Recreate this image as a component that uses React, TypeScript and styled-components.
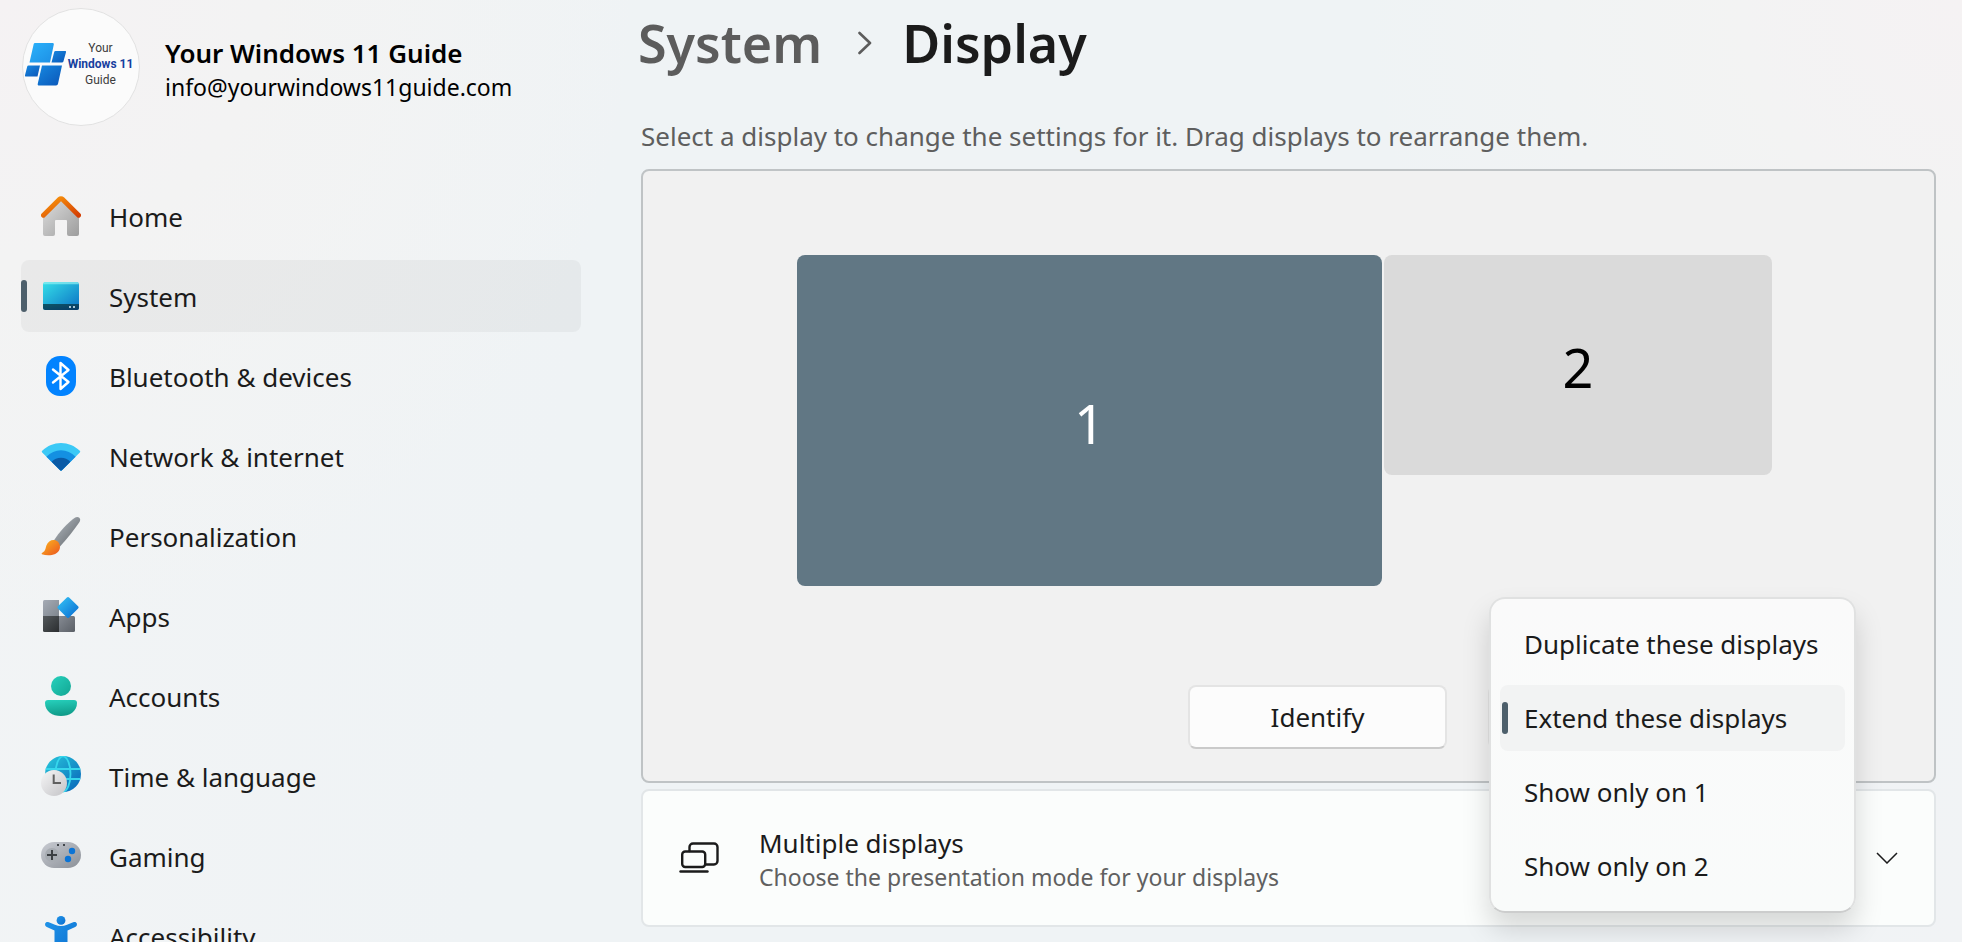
import React from "react";
import styled, { createGlobalStyle } from "styled-components";

const GlobalStyle = createGlobalStyle`
  *, *::before, *::after { box-sizing: border-box; }
  body {
    margin: 0;
    color: #1b1b1b;
    font-family: "Noto Sans", "Open Sans", sans-serif;
    font-size: 26px;
    line-height: 36px;
  }
  button { font: inherit; color: inherit; }
`;

const Page = styled.div`
  display: flex;
  gap: 60px;
  height: 100vh;
  padding: 0 26px 0 21px;
  overflow: hidden;
  background:
    radial-gradient(circle at 0 0, #f5f2f3 0, #f3f3f3 260px, rgba(243, 243, 243, 0) 640px),
    radial-gradient(circle at 100% 0, #f5f2f3 0, #f3f3f3 220px, rgba(243, 243, 243, 0) 600px),
    linear-gradient(100deg, #f2f4f5 0, #eff3f5 30%, #eff3f5 80%, #f1f3f5 100%);
`;

const Sidebar = styled.aside`
  flex: 0 0 560px;
  min-width: 0;
`;

const Profile = styled.div`
  display: flex;
  align-items: center;
  gap: 25px;
  padding-top: 8px;
  margin-bottom: 54px;
`;

const Avatar = styled.div`
  display: flex;
  align-items: center;
  flex: none;
  width: 118px;
  height: 118px;
  padding: 0 5px 6px 2px;
  margin-left: 1px;
  border: 1px solid #e2e2e2;
  border-radius: 50%;
  background: #fbfbfb;
`;

const AvatarText = styled.div`
  flex: 1;
  color: #3c3c3c;
  font: 12px/16px Roboto, sans-serif;
  text-align: center;
  white-space: nowrap;
`;

const AvatarStrong = styled.div`
  color: #173f9f;
  font-weight: 700;
`;

const ProfileText = styled.div`
  padding-top: 5px;
  color: #000;
  line-height: 34px;
`;

const ProfileName = styled.div`
  font-weight: 600;
`;

const ProfileMail = styled.div`
  font-size: 23px;
`;

const NavList = styled.ul`
  display: flex;
  flex-direction: column;
  gap: 8px;
  margin: 0;
  padding: 0;
  list-style: none;
`;

const NavLink = styled.a<{ $active?: boolean }>`
  position: relative;
  display: flex;
  align-items: center;
  gap: 28px;
  height: 72px;
  padding: 0 20px;
  border-radius: 8px;
  background: ${(p) => (p.$active ? "rgba(0, 0, 0, 0.04)" : "transparent")};
  color: inherit;
  text-decoration: none;
`;

const NavLabel = styled.span`
  padding-top: 2px;
`;

const Pill = styled.span`
  position: absolute;
  left: 0;
  top: 50%;
  width: 6px;
  height: 32px;
  margin-top: -16px;
  border-radius: 3px;
  background: #4d5f6b;
`;

const NavIcon = styled.svg`
  flex: none;
  width: 40px;
  height: 40px;
`;

const Main = styled.main`
  flex: 1;
  min-width: 0;
`;

const Breadcrumb = styled.h1`
  display: flex;
  align-items: center;
  gap: 30px;
  margin: 0;
  padding-top: 7px;
  font-size: 52px;
  font-weight: 600;
  line-height: 72px;
`;

const CrumbLink = styled.a`
  margin: 0 6px 0 -3px;
  color: #5c5c5c;
  text-decoration: none;
`;

const Hint = styled.p`
  margin: 39px 0 15px;
  color: #5e5e5e;
`;

const Panel = styled.section`
  display: flex;
  flex-direction: column;
  padding: 84px 78px 32px 80px;
  border: 2px solid #bfc3c5;
  border-radius: 8px;
  background: #f1f1f1;
`;

const Arrangement = styled.div`
  display: flex;
  align-items: flex-start;
  justify-content: center;
  gap: 2px;
  padding-right: 10px;
`;

const Monitor = styled.button<{ $selected?: boolean }>`
  width: ${(p) => (p.$selected ? "585px" : "388px")};
  height: ${(p) => (p.$selected ? "331px" : "220px")};
  padding: 4px 0 0;
  border: 0;
  border-radius: 8px;
  background: ${(p) => (p.$selected ? "#617784" : "#dadada")};
  color: ${(p) => (p.$selected ? "#fff" : "#000")};
  font-size: 54px;
  line-height: 72px;
`;

const Actions = styled.div`
  display: flex;
  justify-content: flex-end;
  gap: 41px;
  margin-top: 99px;
`;

const ActionButton = styled.button`
  width: 259px;
  height: 64px;
  padding: 0;
  border: 2px solid #e4e4e4;
  border-bottom-color: #cacaca;
  border-radius: 8px;
  background: #fcfcfc;
`;

const Dropdown = styled.div`
  position: relative;
  width: 368px;
  height: 64px;
`;

const DropdownTrigger = styled(ActionButton)`
  display: block;
  width: 100%;
`;

const Menu = styled.div`
  position: absolute;
  left: 1px;
  right: 0;
  top: -88px;
  z-index: 1;
  display: flex;
  flex-direction: column;
  gap: 8px;
  padding: 12px 9px;
  border: 2px solid #e0e1e1;
  border-bottom-color: #cccdcd;
  border-radius: 16px;
  background: linear-gradient(#fafafa, #f9fbfa);
  box-shadow: 0 16px 28px rgba(0, 0, 0, 0.15);
`;

const MenuItem = styled.button<{ $selected?: boolean }>`
  position: relative;
  height: 66px;
  padding: 0 0 0 24px;
  border: 0;
  border-radius: 8px;
  background: ${(p) => (p.$selected ? "#f2f3f3" : "transparent")};
  text-align: left;
  white-space: nowrap;
`;

const MenuPill = styled(Pill)`
  left: 2px;
`;

const Card = styled.button`
  display: flex;
  align-items: center;
  width: 100%;
  height: 138px;
  margin-top: 6px;
  padding: 0 36px;
  border: 2px solid #e2e6e8;
  border-radius: 8px;
  background: #fbfdfc;
  text-align: left;
`;

const CardText = styled.span`
  display: flex;
  flex: 1;
  flex-direction: column;
  margin-left: 40px;
  padding-top: 4px;
  line-height: 34px;
`;

const CardNote = styled.span`
  color: #606060;
  font-size: 23px;
`;

const Gradient = ({ id, from, to, vertical }: { id: string; from: string; to: string; vertical?: boolean }) => (
  <linearGradient id={id} x1="0" y1="0" x2={vertical ? "0.2" : "1"} y2="1">
    <stop offset="0" stopColor={from} />
    <stop offset="1" stopColor={to} />
  </linearGradient>
);

const HomeIcon = (
  <>
    <defs>
      <Gradient id="homeWall" from="#dedede" to="#9d9d9d" />
      <Gradient id="homeRoof" from="#fb9a0c" to="#d43f04" />
    </defs>
    <path d="M2 18 20 3l18 15v20a2 2 0 0 1-2 2h-8a2 2 0 0 1-2-2V25a1 1 0 0 0-1-1H15a1 1 0 0 0-1 1v13a2 2 0 0 1-2 2H4a2 2 0 0 1-2-2z" fill="url(#homeWall)" />
    <path d="M2.4 19.3 18.5 3.2a2.1 2.1 0 0 1 3 0l16.1 16.1" fill="none" stroke="url(#homeRoof)" strokeWidth="4.8" strokeLinecap="round" />
  </>
);

const SystemIcon = (
  <>
    <defs>
      <Gradient id="sysScreen" from="#35dfe8" to="#0b70c4" />
      <Gradient id="sysBar" from="#0e5566" to="#083a66" />
    </defs>
    <rect x="2" y="6" width="36" height="28" rx="2.5" fill="url(#sysScreen)" />
    <path d="M2 8.2A2.3 2.3 0 0 1 4.300 6h31.400A2.300 2.300 0 0 1 38 8.200z" fill="#8ff0f2" opacity=".7" />
    <path d="M2 28h36v3.500a2.500 2.500 0 0 1-2.500 2.500h-31A2.500 2.500 0 0 1 2 31.500z" fill="url(#sysBar)" />
    <path d="M28 30h2v2h-2zM32 30h2v2h-2z" fill="#a9c6d6" />
  </>
);

const BluetoothIcon = (
  <>
    <rect x="5" y="0" width="30" height="40" rx="14" fill="#0283ff" />
    <path d="m12 13.500 15.500 12.500L19.500 33V7l8 7L12 26.500" fill="none" stroke="#fff" strokeWidth="2.400" strokeLinecap="round" strokeLinejoin="round" />
  </>
);

const NetworkIcon = (
  <>
    <path d="M1.200 16.500a1.200 1.200 0 0 1 0-1.800C6.500 9.800 13 7 20 7s13.500 2.800 18.800 7.700a1.200 1.200 0 0 1 0 1.800L20.900 34.200a1.300 1.300 0 0 1-1.800 0z" fill="#3bc9f6" />
    <path d="M5.400 20.700C9.500 16.500 14.500 14.200 20 14.200s10.500 2.300 14.600 6.500L20.900 34.200a1.300 1.300 0 0 1-1.800 0z" fill="#1490e2" />
    <path d="M10.600 25.800c2.600-2.600 5.800-4 9.400-4s6.800 1.400 9.400 4l-8.500 8.400a1.300 1.300 0 0 1-1.800 0z" fill="#0a5aa6" />
  </>
);

const BrushIcon = (
  <>
    <defs>
      <Gradient id="brushHandle" from="#b6bdc4" to="#5f6468" />
      <Gradient id="brushPaint" from="#fdb81e" to="#ea5420" />
    </defs>
    <path d="M12.500 25C18 16.500 27 6.500 34.200 1.600c3-2 6.500 1 4.300 4.400C33.500 13.500 26.500 22.500 19 30.500z" fill="url(#brushHandle)" />
    <path d="M.9 38.300c-.6-.6-.2-1.300.8-1.800C4.500 35 4.500 32 5.400 29.500c1.500-4.300 5.500-6.300 9-5.200 3.800 1.300 5.400 5.300 4.200 8.900C16.500 39.500 7 40.300.9 38.300z" fill="url(#brushPaint)" />
  </>
);

const AppsIcon = (
  <>
    <defs>
      <Gradient id="appsA" from="#a5abb5" to="#80878f" />
      <Gradient id="appsB" from="#54595c" to="#2b2e30" />
      <Gradient id="appsC" from="#868b93" to="#5a5f66" />
      <Gradient id="appsD" from="#37c6f7" to="#0669d0" />
    </defs>
    <path d="M3.500 4H18v16H2V5.500A1.500 1.500 0 0 1 3.500 4z" fill="url(#appsA)" />
    <path d="M2 20h16v16H3.500A1.500 1.500 0 0 1 2 34.500z" fill="url(#appsB)" />
    <path d="M18 20h14.500a1.500 1.500 0 0 1 1.500 1.500v13a1.500 1.500 0 0 1-1.500 1.500H18z" fill="url(#appsC)" />
    <path d="M25.900 1.400a1.600 1.600 0 0 1 2.200 0l9 8.900a1.500 1.500 0 0 1 0 2.200l-9 8.900a1.600 1.600 0 0 1-2.200 0l-9-8.900a1.500 1.500 0 0 1 0-2.200z" fill="url(#appsD)" />
  </>
);

const AccountsIcon = (
  <>
    <defs>
      <Gradient id="accTop" from="#27d1bd" to="#12a693" />
      <Gradient id="accBody" from="#27d1bd" to="#109c8a" vertical />
    </defs>
    <circle cx="20" cy="10" r="10" fill="url(#accTop)" />
    <path d="M7 24h26a3 3 0 0 1 3 3c0 8.500-7.500 13-16 13S4 35.500 4 27a3 3 0 0 1 3-3z" fill="url(#accBody)" />
  </>
);

const TimeIcon = (
  <>
    <defs>
      <Gradient id="globe" from="#29c9dc" to="#0562b8" />
      <Gradient id="clock" from="#f6f6f7" to="#c3c3c6" />
    </defs>
    <circle cx="22" cy="18" r="18" fill="url(#globe)" />
    <g fill="none" stroke="#36d7ec" strokeWidth="1.800">
      <path d="M4.700 13h34.600M5 23h34.200" />
      <ellipse cx="22" cy="18" rx="7.500" ry="17.600" />
    </g>
    <circle cx="13" cy="27" r="13" fill="url(#clock)" />
    <path d="M12.700 18.500V27H20" fill="none" stroke="#606060" strokeWidth="2" />
  </>
);

const GamingIcon = (
  <>
    <defs>
      <Gradient id="pad" from="#c8cbd2" to="#8b9097" />
    </defs>
    <rect x="0" y="6" width="40" height="26" rx="13" fill="url(#pad)" />
    <circle cx="11" cy="19" r="7" fill="#a6abb1" />
    <path d="M11 14v10M6 19h10" stroke="#3b3f43" strokeWidth="2" />
    <circle cx="31" cy="15" r="3.200" fill="#0b74d6" />
    <circle cx="27" cy="23" r="3.200" fill="#0b74d6" />
    <path d="M16 8h2v2h-2zM22 8h2v2h-2z" fill="#43474b" />
  </>
);

const AccessibilityIcon = (
  <>
    <defs>
      <Gradient id="access" from="#2093e8" to="#0a6fd0" />
    </defs>
    <circle cx="20" cy="4.400" r="4.400" fill="url(#access)" />
    <path d="M4.300 7.300c.7-1.300 2-1.700 3.500-1.100C12 8 16 10 20 10s8-2 12.200-3.800c1.500-.6 2.800-.2 3.500 1.100.6 1.500 0 3-1.500 3.600L26.500 14.500V38a2.500 2.500 0 0 1-5 0V28h-3v10a2.500 2.500 0 0 1-5 0V14.500L5.800 10.900c-1.500-.6-2.100-2.100-1.500-3.600z" fill="url(#access)" />
  </>
);

const navItems = [
  { label: "Home", icon: HomeIcon },
  { label: "System", icon: SystemIcon, active: true },
  { label: "Bluetooth & devices", icon: BluetoothIcon },
  { label: "Network & internet", icon: NetworkIcon },
  { label: "Personalization", icon: BrushIcon },
  { label: "Apps", icon: AppsIcon },
  { label: "Accounts", icon: AccountsIcon },
  { label: "Time & language", icon: TimeIcon },
  { label: "Gaming", icon: GamingIcon },
  { label: "Accessibility", icon: AccessibilityIcon },
];

const modes = [
  { id: "duplicate", label: "Duplicate these displays" },
  { id: "extend", label: "Extend these displays" },
  { id: "only-1", label: "Show only on 1" },
  { id: "only-2", label: "Show only on 2" },
];

const BrandMark = () => (
  <svg width="42" height="43" viewBox="0 0 42 43" aria-hidden="true">
    <defs>
      <Gradient id="brandA" from="#2bb2fb" to="#1d8fe4" />
      <Gradient id="brandB" from="#1788e0" to="#0a56b8" />
    </defs>
    <path d="M10 0h17.500c1 0 1.500.6 1.300 1.500L25 19.500H4.500L8.700 1C8.900.4 9.300 0 10 0z" fill="url(#brandA)" />
    <path d="M30.500 8H40c.8 0 1.200.5 1 1.200l-2.600 9.300c-.2.700-.7 1-1.400 1H26.500l2.700-10.400c.2-.7.600-1.100 1.300-1.100z" fill="url(#brandB)" />
    <path d="M3.500 22.500H15L12.500 33.500H1c-.8 0-1.200-.5-1-1.200l2.200-8.800c.2-.7.600-1 1.300-1z" fill="url(#brandB)" />
    <path d="M17 22.500h20L33 40.800c-.3 1-.9 1.700-2 1.700H14c-1 0-1.500-.6-1.300-1.500z" fill="url(#brandB)" />
  </svg>
);

export default function App() {
  const [mode, setMode] = React.useState("extend");

  return (
    <>
      <GlobalStyle />
      <Page>
        <Sidebar>
          <Profile>
            <Avatar>
              <BrandMark />
              <AvatarText>
                <div>Your</div>
                <AvatarStrong>Windows 11</AvatarStrong>
                <div>Guide</div>
              </AvatarText>
            </Avatar>
            <ProfileText>
              <ProfileName>Your Windows 11 Guide</ProfileName>
              <ProfileMail>info@yourwindows11guide.com</ProfileMail>
            </ProfileText>
          </Profile>
          <nav aria-label="Settings">
            <NavList>
              {navItems.map((item) => (
                <li key={item.label}>
                  <NavLink href="#" $active={item.active} aria-current={item.active ? "page" : undefined}>
                    {item.active && <Pill />}
                    <NavIcon viewBox="0 0 40 40" aria-hidden="true">{item.icon}</NavIcon>
                    <NavLabel>{item.label}</NavLabel>
                  </NavLink>
                </li>
              ))}
            </NavList>
          </nav>
        </Sidebar>

        <Main>
          <Breadcrumb>
            <CrumbLink href="#">System</CrumbLink>
            <svg width="14" height="24" viewBox="0 0 14 24" aria-hidden="true">
              <path d="m1.500 2 10.500 10L1.500 22" fill="none" stroke="#5c5c5c" strokeWidth="2.600" strokeLinecap="round" strokeLinejoin="round" />
            </svg>
            <span>Display</span>
          </Breadcrumb>
          <Hint>Select a display to change the settings for it. Drag displays to rearrange them.</Hint>

          <Panel>
            <Arrangement>
              <Monitor type="button" $selected>1</Monitor>
              <Monitor type="button">2</Monitor>
            </Arrangement>
            <Actions>
              <ActionButton type="button">Identify</ActionButton>
              <Dropdown>
                <DropdownTrigger type="button" aria-haspopup="listbox" aria-expanded="true" aria-labelledby={mode} />
                <Menu role="listbox" aria-label="Presentation mode">
                  {modes.map((m) => (
                    <MenuItem
                      key={m.id}
                      id={m.id}
                      type="button"
                      role="option"
                      aria-selected={m.id === mode}
                      $selected={m.id === mode}
                      onClick={() => setMode(m.id)}
                    >
                      {m.id === mode && <MenuPill />}
                      {m.label}
                    </MenuItem>
                  ))}
                </Menu>
              </Dropdown>
            </Actions>
          </Panel>

          <Card type="button" aria-expanded="false">
            <svg width="40" height="32" viewBox="0 0 40 32" fill="none" stroke="#1b1b1b" strokeWidth="2.400" strokeLinecap="round" aria-hidden="true">
              <path d="M10.500 9V5a3.500 3.500 0 0 1 3.500-3.500h21A3.500 3.500 0 0 1 38.500 5v14a3.500 3.500 0 0 1-3.500 3.500h-8" />
              <rect x="3.200" y="9.500" width="23" height="15.500" rx="3" />
              <path d="M1.500 29.500h27" />
            </svg>
            <CardText>
              <span>Multiple displays</span>
              <CardNote>Choose the presentation mode for your displays</CardNote>
            </CardText>
            <svg width="22" height="12" viewBox="0 0 22 12" fill="none" stroke="#1b1b1b" strokeWidth="1.500" aria-hidden="true">
              <path d="m1 1 10 10L21 1" />
            </svg>
          </Card>
        </Main>
      </Page>
    </>
  );
}
